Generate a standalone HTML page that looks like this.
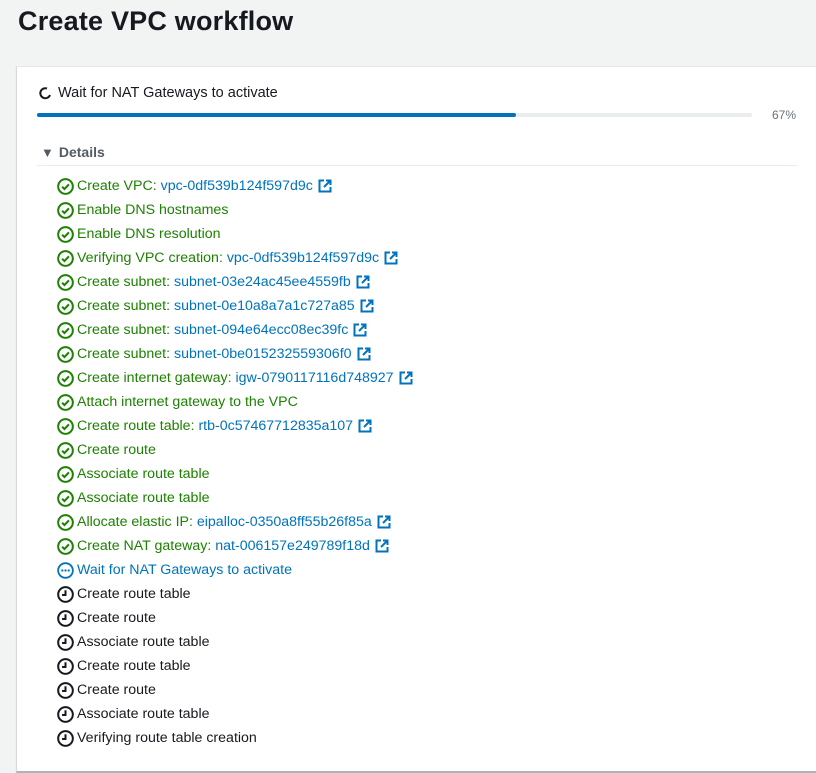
<!DOCTYPE html>
<html><head><meta charset="utf-8"><style>
*{margin:0;padding:0;box-sizing:border-box}
body{width:816px;height:773px;background:#f2f3f3;font-family:"Liberation Sans",sans-serif;position:relative;overflow:hidden}
h1{position:absolute;left:18px;top:6px;font-size:27px;font-weight:bold;color:#16191f;letter-spacing:0.2px}
.panel{position:absolute;left:16px;top:66px;width:810px;height:707px;background:#fff;border-left:1px solid #d5dbdb;border-top:1px solid #e5e8e8;border-bottom:2px solid #aab7b8;box-shadow:0 1px 1px rgba(0,0,0,.1)}
.status{position:absolute;left:38px;top:85px;font-size:14.5px;color:#16191f;display:flex;align-items:center}
.bar{position:absolute;left:37px;top:113px;width:715px;height:4px;background:#eaeded;border-radius:2px}
.bar div{width:479px;height:4px;background:#0073bb;border-radius:2px}
.pct{position:absolute;left:772px;top:108px;font-size:12px;color:#687078}
.det{position:absolute;left:41px;top:144px;font-size:14px;font-weight:bold;color:#545b64}
.hr{position:absolute;left:37px;top:165px;width:760px;height:1px;background:#eaeded}
.list{position:absolute;left:57px;top:174px}
.r{height:24px;display:flex;align-items:center;font-size:14.2px;white-space:nowrap}
.r svg.i{width:17px;height:17px;margin-right:3px;flex:none}
.g{color:#1d8102}.b{color:#0073bb}.k{color:#16191f}
.ext{width:14px;height:14px;margin-left:5px;vertical-align:middle}
</style></head><body>
<h1>Create VPC workflow</h1>
<div class="panel"></div>
<div class="status"><svg width="14" height="14" viewBox="0 0 14 14" style="margin-right:6px"><path d="M9 2.5A5 5 0 1 0 12 9" fill="none" stroke="#16191f" stroke-width="2"/></svg>Wait for NAT Gateways to activate</div>
<div class="bar"><div></div></div>
<div class="pct">67%</div>
<div class="det"><span style="font-size:13px;color:#545b64;margin-right:5px">▼</span>Details</div>
<div class="hr"></div>
<div class="list" id="l"></div>
<script>
var ok='<svg class="i" viewBox="0 0 16 16"><circle cx="8" cy="8" r="6.9" fill="none" stroke="#1d8102" stroke-width="1.9"/><path d="M4.8 8.2l2.2 2.2 4.2-4.4" fill="none" stroke="#1d8102" stroke-width="1.9"/></svg>';
var pend='<svg class="i" viewBox="0 0 16 16"><circle cx="8" cy="8" r="6.9" fill="none" stroke="#0073bb" stroke-width="1.7"/><circle cx="5" cy="8" r="1.1" fill="#0073bb"/><circle cx="8" cy="8" r="1.1" fill="#0073bb"/><circle cx="11" cy="8" r="1.1" fill="#0073bb"/></svg>';
var clk='<svg class="i" viewBox="0 0 16 16"><circle cx="8" cy="8" r="6.9" fill="none" stroke="#16191f" stroke-width="1.9"/><path d="M8 4v4.5H4.8" fill="none" stroke="#16191f" stroke-width="1.9"/></svg>';
var ext='<svg class="ext" viewBox="0 0 14 14"><path d="M6 1.5H1.5v11h11V8" fill="none" stroke="#0073bb" stroke-width="2"/><path d="M8 1.5h4.5V6M12.5 1.5L6 8" fill="none" stroke="#0073bb" stroke-width="2"/></svg>';
var d=[["Create VPC: ","vpc-0df539b124f597d9c"],["Enable DNS hostnames"],["Enable DNS resolution"],["Verifying VPC creation: ","vpc-0df539b124f597d9c"],["Create subnet: ","subnet-03e24ac45ee4559fb"],["Create subnet: ","subnet-0e10a8a7a1c727a85"],["Create subnet: ","subnet-094e64ecc08ec39fc"],["Create subnet: ","subnet-0be015232559306f0"],["Create internet gateway: ","igw-0790117116d748927"],["Attach internet gateway to the VPC"],["Create route table: ","rtb-0c57467712835a107"],["Create route"],["Associate route table"],["Associate route table"],["Allocate elastic IP: ","eipalloc-0350a8ff55b26f85a"],["Create NAT gateway: ","nat-006157e249789f18d"]];
var h='';
d.forEach(function(x){h+='<div class="r g">'+ok+'<span>'+x[0]+(x[1]?'<span class="b">'+x[1]+'</span>'+ext:'')+'</span></div>'});
h+='<div class="r b">'+pend+'<span>Wait for NAT Gateways to activate</span></div>';
["Create route table","Create route","Associate route table","Create route table","Create route","Associate route table","Verifying route table creation"].forEach(function(t){h+='<div class="r k">'+clk+'<span>'+t+'</span></div>'});
document.getElementById('l').innerHTML=h;
</script>
</body></html>
